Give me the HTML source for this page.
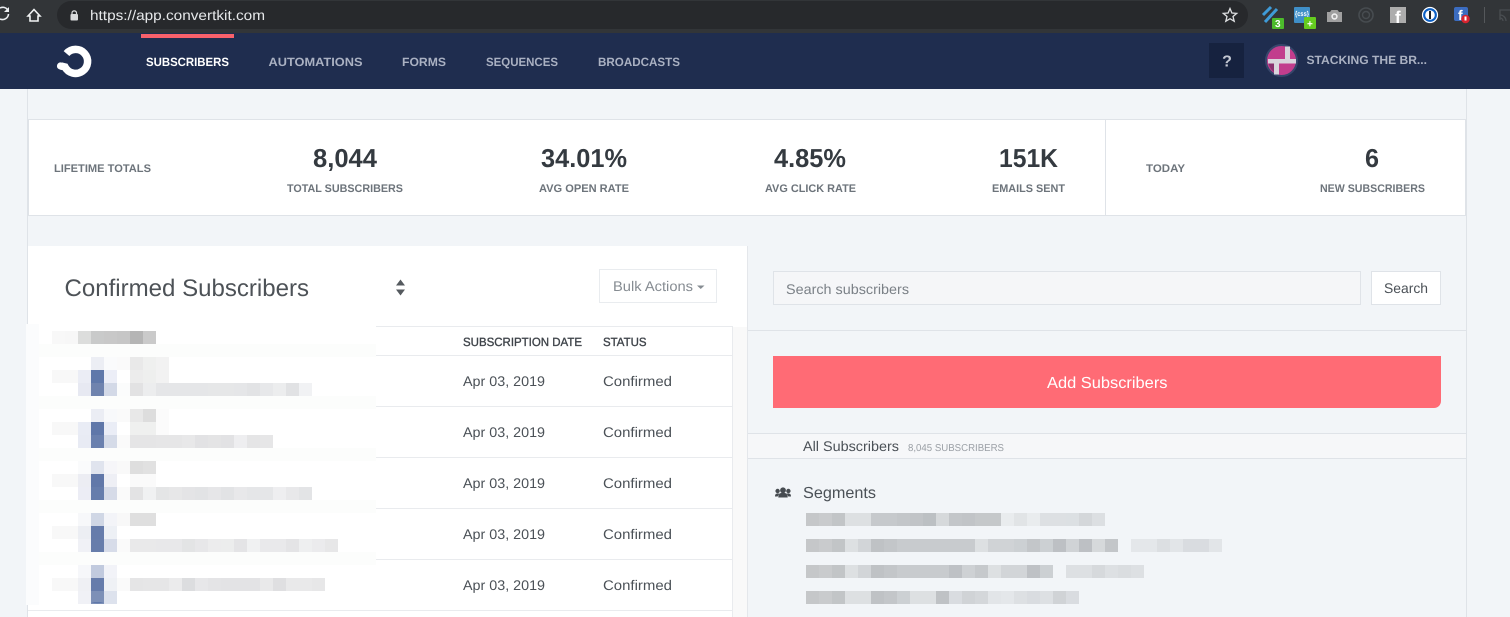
<!DOCTYPE html>
<html lang="en"><head><meta charset="utf-8"><title>ConvertKit Subscribers</title>
<style>
html,body{margin:0;padding:0;width:1510px;height:617px;overflow:hidden;background:#f2f5f8}
svg{position:absolute;left:0;top:0;display:block}
text{font-family:"Liberation Sans",sans-serif}
.m rect{width:13px;height:13px}
.nav{font-size:12px;font-weight:700;fill:#aab1c2}
.lab{font-size:11px;font-weight:700;fill:#6d747b}
.big{font-size:26px;font-weight:700;fill:#343a40}
.th{font-size:12px;fill:#3f444a;stroke:#3f444a;stroke-width:.35}
.td{font-size:14px;fill:#4b5157}
</style></head><body>
<svg width="1510" height="617" viewBox="0 0 1510 617" xmlns="http://www.w3.org/2000/svg" text-rendering="geometricPrecision">
<!-- browser chrome -->
<rect width="1510" height="33" fill="#323538"/>
<rect x="57" y="1" width="1191" height="28" rx="14" fill="#27292c"/>
<path d="M7.5 9.5A6 6 0 0 0 0 8M8.5 14A6 6 0 0 1 0 19" fill="none" stroke="#eceff1" stroke-width="1.6"/><path d="M9 7v5h-5z" fill="#eceff1"/>
<path d="M28 16l6-6.500 6 6.500h-2v5h-8v-5z" fill="none" stroke="#f1f3f4" stroke-width="1.600" stroke-linejoin="miter"/>
<rect x="70.500" y="14" width="7.500" height="6.500" rx="1" fill="#d8dadc"/><path d="M72 14.500v-1.800a2.300 2.300 0 0 1 4.500 0v1.800" fill="none" stroke="#d8dadc" stroke-width="1.200"/>
<text x="90" y="20" font-size="14" fill="#e6e8ea" textLength="175" lengthAdjust="spacingAndGlyphs">https://app.convertkit.com</text>
<path d="M1230 8.500l1.900 4.500 4.800.4-3.700 3.100 1.200 4.700-4.200-2.500-4.200 2.500 1.200-4.700-3.700-3.100 4.800-.4z" fill="none" stroke="#dfe1e3" stroke-width="1.300"/>
<!-- extensions -->
<path d="M1263 15l8-8M1265 22l12-13" stroke="#3f9bd8" stroke-width="3" fill="none"/>
<rect x="1272" y="18" width="12" height="11" rx="1" fill="#4cbb2b"/><text x="1275" y="27" font-size="10" font-weight="700" fill="#fff">3</text>
<rect x="1294" y="7" width="16" height="16" rx="1" fill="#3f8fc8"/><text x="1295" y="16" font-size="7" font-weight="700" fill="#fff" textLength="14" lengthAdjust="spacingAndGlyphs">{css}</text>
<rect x="1304" y="17" width="12" height="12" rx="1" fill="#65cc1f"/><text x="1307" y="27" font-size="10" font-weight="700" fill="#fff">+</text>
<path d="M1327 12h3l1.500-2h6l1.500 2h3v10h-15z" fill="#a0a0a0"/><circle cx="1334.500" cy="16.500" r="3.200" fill="#eee"/><circle cx="1334.500" cy="16.500" r="1.600" fill="#a0a0a0"/>
<circle cx="1366" cy="15" r="7" fill="none" stroke="#474c50" stroke-width="1.600"/><circle cx="1366" cy="15" r="3.500" fill="none" stroke="#474c50" stroke-width="1.400"/>
<rect x="1390" y="7" width="16" height="16" fill="#adadad"/><text x="1395" y="23" font-size="17" font-weight="700" fill="#fff">f</text>
<circle cx="1430" cy="15" r="7.500" fill="#0b5fc4" stroke="#fff" stroke-width="1.200"/><circle cx="1430" cy="15" r="4.800" fill="#fff"/><rect x="1429" y="11" width="2" height="8" fill="#1a1f24"/>
<rect x="1454" y="7" width="14" height="14" rx="2" fill="#3b6cc0"/><text x="1458" y="20" font-size="14" font-weight="700" fill="#fff">f</text><circle cx="1465.500" cy="19" r="4.300" fill="#d8232f"/><rect x="1464.500" y="16.500" width="2" height="4" fill="#fff"/>
<rect x="1484" y="7" width="1" height="16" fill="#55585b"/>
<path d="M1500 20v-10h10M1500 15a6 6 0 0 1 6 6M1500 18a3 3 0 0 1 3 3" fill="none" stroke="#4a4e52" stroke-width="1.300"/>
<!-- app nav -->
<rect y="33" width="1510" height="56" fill="#1f2d4f"/>
<rect x="141" y="34" width="93" height="4" fill="#f9616b"/>
<path d="M66.500 53.600A12 12 0 1 1 65 67L61 66" fill="none" stroke="#fff" stroke-width="7.500"/>
<circle cx="60.500" cy="66" r="3.600" fill="#fff"/>
<text class="nav" x="146" y="66" style="fill:#fff" textLength="83" lengthAdjust="spacingAndGlyphs">SUBSCRIBERS</text>
<text class="nav" x="268.500" y="66" textLength="94" lengthAdjust="spacingAndGlyphs">AUTOMATIONS</text>
<text class="nav" x="402" y="66" textLength="44" lengthAdjust="spacingAndGlyphs">FORMS</text>
<text class="nav" x="486" y="66" textLength="72" lengthAdjust="spacingAndGlyphs">SEQUENCES</text>
<text class="nav" x="598" y="66" textLength="82" lengthAdjust="spacingAndGlyphs">BROADCASTS</text>
<rect x="1209" y="43" width="35" height="35" fill="#16223f"/>
<text x="1227" y="66.500" text-anchor="middle" font-size="16" font-weight="700" fill="#c4c8d2">?</text>
<circle cx="1281.500" cy="60.500" r="15.500" fill="#c23d8d" stroke="#37466b" stroke-width="2"/>
<path d="M1279 63h16a14 14 0 0 1-8 11h-8z" fill="#c23d8d"/><path d="M1268.500 63h5.500v9a14 14 0 0 1-5.500-9z" fill="#8a2f6e"/>
<path d="M1268 59h28v4.500h-28zM1285 46.500h5v13h-5zM1274 63h5v11.500h-5z" fill="#d9d4dc"/>
<text class="nav" x="1306.500" y="64" textLength="120.500" lengthAdjust="spacingAndGlyphs">STACKING THE BR...</text>
<!-- page frame -->
<rect x="27" y="89" width="1" height="528" fill="#dfe3e8"/>
<rect x="1466" y="89" width="1" height="528" fill="#dfe3e8"/>
<!-- stats card -->
<rect x="28.500" y="119.500" width="1437" height="96" fill="#fff" stroke="#dfe3e8"/>
<rect x="1105" y="120" width="1" height="95" fill="#dfe3e8"/>
<text class="lab" x="54" y="172" textLength="97" lengthAdjust="spacingAndGlyphs">LIFETIME TOTALS</text>
<text class="big" x="313" y="167" textLength="64" lengthAdjust="spacingAndGlyphs">8,044</text>
<text class="lab" x="287" y="192" textLength="116" lengthAdjust="spacingAndGlyphs">TOTAL SUBSCRIBERS</text>
<text class="big" x="541" y="167" textLength="86" lengthAdjust="spacingAndGlyphs">34.01%</text>
<text class="lab" x="539" y="192" textLength="90" lengthAdjust="spacingAndGlyphs">AVG OPEN RATE</text>
<text class="big" x="774" y="167" textLength="72" lengthAdjust="spacingAndGlyphs">4.85%</text>
<text class="lab" x="765" y="192" textLength="91" lengthAdjust="spacingAndGlyphs">AVG CLICK RATE</text>
<text class="big" x="999" y="167" textLength="59" lengthAdjust="spacingAndGlyphs">151K</text>
<text class="lab" x="992" y="192" textLength="73" lengthAdjust="spacingAndGlyphs">EMAILS SENT</text>
<text class="lab" x="1146" y="172" textLength="39" lengthAdjust="spacingAndGlyphs">TODAY</text>
<text class="big" x="1365" y="167" textLength="14" lengthAdjust="spacingAndGlyphs">6</text>
<text class="lab" x="1320" y="192" textLength="105" lengthAdjust="spacingAndGlyphs">NEW SUBSCRIBERS</text>
<!-- left panel -->
<rect x="28" y="246" width="719" height="371" fill="#fff"/>
<rect x="733" y="327" width="14" height="290" fill="#f9f9f9"/>
<rect x="747" y="246" width="1" height="371" fill="#e4e7eb"/>
<text x="64.500" y="296" font-size="24" fill="#4d5257" textLength="244.500" lengthAdjust="spacingAndGlyphs">Confirmed Subscribers</text>
<path d="M400.500 279.500l4.500 6h-9zM400.500 295.500l4.500-6h-9z" fill="#555a5f"/>
<rect x="599.500" y="269.500" width="117" height="33" fill="#fff" stroke="#e9ecef"/>
<text x="613" y="291" font-size="14" fill="#868c92" textLength="80" lengthAdjust="spacingAndGlyphs">Bulk Actions</text>
<path d="M697 285.500h7.500l-3.750 3.500z" fill="#868c92"/>
<!-- table -->
<rect x="376" y="326" width="357" height="1" fill="#e9ebee"/>
<rect x="732" y="326" width="1" height="291" fill="#e9ebee"/>
<rect x="28" y="355" width="704" height="1" fill="#e9ebee"/>
<rect x="28" y="406" width="704" height="1" fill="#e9ebee"/>
<rect x="28" y="457" width="704" height="1" fill="#e9ebee"/>
<rect x="28" y="508" width="704" height="1" fill="#e9ebee"/>
<rect x="28" y="559" width="704" height="1" fill="#e9ebee"/>
<rect x="28" y="610" width="704" height="1" fill="#e9ebee"/>
<text class="th" x="463" y="346" textLength="119" lengthAdjust="spacingAndGlyphs">SUBSCRIPTION DATE</text>
<text class="th" x="603" y="346" textLength="43.500" lengthAdjust="spacingAndGlyphs">STATUS</text>
<text class="td" x="463" y="386" textLength="82" lengthAdjust="spacingAndGlyphs">Apr 03, 2019</text><text class="td" x="603" y="386" textLength="69" lengthAdjust="spacingAndGlyphs">Confirmed</text>
<text class="td" x="463" y="437" textLength="82" lengthAdjust="spacingAndGlyphs">Apr 03, 2019</text><text class="td" x="603" y="437" textLength="69" lengthAdjust="spacingAndGlyphs">Confirmed</text>
<text class="td" x="463" y="488" textLength="82" lengthAdjust="spacingAndGlyphs">Apr 03, 2019</text><text class="td" x="603" y="488" textLength="69" lengthAdjust="spacingAndGlyphs">Confirmed</text>
<text class="td" x="463" y="539" textLength="82" lengthAdjust="spacingAndGlyphs">Apr 03, 2019</text><text class="td" x="603" y="539" textLength="69" lengthAdjust="spacingAndGlyphs">Confirmed</text>
<text class="td" x="463" y="590" textLength="82" lengthAdjust="spacingAndGlyphs">Apr 03, 2019</text><text class="td" x="603" y="590" textLength="69" lengthAdjust="spacingAndGlyphs">Confirmed</text>
<!-- redaction mosaic, left -->
<rect x="27" y="324" width="349" height="281" fill="#fff"/>
<rect x="26" y="324" width="13" height="281" fill="#fbfcfd"/>
<rect x="39" y="344" width="337" height="13" fill="#fcfdfc"/><rect x="39" y="396" width="337" height="13" fill="#fcfdfc"/><rect x="39" y="448" width="337" height="13" fill="#fcfdfc"/><rect x="39" y="500" width="337" height="13" fill="#fcfdfc"/><rect x="39" y="552" width="337" height="13" fill="#fcfdfc"/>
<g class="m" shape-rendering="crispEdges">
<rect x="52" y="331" fill="#f8f8f8"/><rect x="65" y="331" fill="#f7f7f7"/><rect x="78" y="331" fill="#dcdddc"/><rect x="91" y="331" fill="#c9caca"/><rect x="104" y="331" fill="#c8c8c8"/><rect x="117" y="331" fill="#c6c6c6"/><rect x="130" y="331" fill="#b5b5b5"/><rect x="143" y="331" fill="#cacaca"/>
<rect x="91" y="357" fill="#eceef4"/><rect x="104" y="357" fill="#fafbfc"/><rect x="117" y="357" fill="#fafafa"/><rect x="130" y="357" fill="#e9e9e9"/><rect x="143" y="357" fill="#eff0ef"/><rect x="156" y="357" fill="#f2f2f2"/>
<rect x="52" y="370" fill="#f8f8f8"/><rect x="65" y="370" fill="#f8f8f8"/><rect x="78" y="370" fill="#ebedf5"/><rect x="91" y="370" fill="#5f78aa"/><rect x="104" y="370" fill="#eceef7"/><rect x="130" y="370" fill="#ececec"/><rect x="143" y="370" fill="#eeefee"/><rect x="156" y="370" fill="#f2f2f2"/>
<rect x="78" y="383" fill="#e7e9f2"/><rect x="91" y="383" fill="#6f83ae"/><rect x="104" y="383" fill="#d3d9e7"/><rect x="117" y="383" fill="#fbfcfc"/><rect x="130" y="383" fill="#e2e2e3"/><rect x="143" y="383" fill="#ecedee"/><rect x="156" y="383" fill="#e5e6e8"/><rect x="169" y="383" fill="#e5e6e8"/><rect x="182" y="383" fill="#e5e6e8"/><rect x="195" y="383" fill="#e5e6e8"/><rect x="208" y="383" fill="#e6e7e8"/><rect x="221" y="383" fill="#e6e7e8"/><rect x="234" y="383" fill="#e5e6e8"/><rect x="247" y="383" fill="#e2e3e5"/><rect x="260" y="383" fill="#e7e8ea"/><rect x="273" y="383" fill="#ecedee"/><rect x="286" y="383" fill="#e1e2e4"/><rect x="299" y="383" fill="#f1f2f4"/>
<rect x="91" y="409" fill="#ebedf4"/><rect x="104" y="409" fill="#f8f9fb"/><rect x="117" y="409" fill="#fafafa"/><rect x="130" y="409" fill="#e8e8e8"/><rect x="143" y="409" fill="#dddddd"/><rect x="156" y="409" fill="#fbfbfb"/>
<rect x="52" y="422" fill="#f8f8f8"/><rect x="65" y="422" fill="#f8f8f8"/><rect x="78" y="422" fill="#e9ecf5"/><rect x="91" y="422" fill="#5f77a9"/><rect x="104" y="422" fill="#eaedf6"/><rect x="130" y="422" fill="#eff0ef"/><rect x="143" y="422" fill="#eff0ef"/><rect x="156" y="422" fill="#fbfbfb"/>
<rect x="78" y="435" fill="#e8ebf4"/><rect x="91" y="435" fill="#6a80ae"/><rect x="104" y="435" fill="#d5dbe8"/><rect x="117" y="435" fill="#fafafa"/><rect x="130" y="435" fill="#e5e5e6"/><rect x="143" y="435" fill="#e5e5e6"/><rect x="156" y="435" fill="#e6e6e7"/><rect x="169" y="435" fill="#e6e6e7"/><rect x="182" y="435" fill="#e8e8e9"/><rect x="195" y="435" fill="#e2e2e4"/><rect x="208" y="435" fill="#e4e4e5"/><rect x="221" y="435" fill="#e2e2e4"/><rect x="234" y="435" fill="#eeeef0"/><rect x="247" y="435" fill="#e5e5e6"/><rect x="260" y="435" fill="#e6e6e7"/>
<rect x="78" y="461" fill="#fafbfc"/><rect x="91" y="461" fill="#e0e4ee"/><rect x="104" y="461" fill="#f6f6f9"/><rect x="117" y="461" fill="#f9f9f9"/><rect x="130" y="461" fill="#dedede"/><rect x="143" y="461" fill="#e1e1e1"/>
<rect x="52" y="474" fill="#f8f8f8"/><rect x="65" y="474" fill="#f8f8f8"/><rect x="78" y="474" fill="#ecedf3"/><rect x="91" y="474" fill="#6178a9"/><rect x="104" y="474" fill="#eeeff5"/><rect x="130" y="474" fill="#fafafa"/><rect x="143" y="474" fill="#fafafa"/>
<rect x="78" y="487" fill="#ecedf5"/><rect x="91" y="487" fill="#667dac"/><rect x="104" y="487" fill="#d6dbe8"/><rect x="117" y="487" fill="#fafafa"/><rect x="130" y="487" fill="#e3e3e4"/><rect x="143" y="487" fill="#f0f1f2"/><rect x="156" y="487" fill="#e4e5e6"/><rect x="169" y="487" fill="#e7e7e8"/><rect x="182" y="487" fill="#e4e4e6"/><rect x="195" y="487" fill="#e2e3e5"/><rect x="208" y="487" fill="#e6e6e8"/><rect x="221" y="487" fill="#e2e3e5"/><rect x="234" y="487" fill="#e8e8ea"/><rect x="247" y="487" fill="#e5e6e8"/><rect x="260" y="487" fill="#e5e6e8"/><rect x="273" y="487" fill="#eeeef0"/><rect x="286" y="487" fill="#e8e8ea"/><rect x="299" y="487" fill="#e3e4e6"/>
<rect x="78" y="513" fill="#f7f8fa"/><rect x="91" y="513" fill="#d0d7e5"/><rect x="104" y="513" fill="#f3f4f8"/><rect x="117" y="513" fill="#f8f8f8"/><rect x="130" y="513" fill="#dfdfdf"/><rect x="143" y="513" fill="#dfdfdf"/>
<rect x="52" y="526" fill="#f8f8f8"/><rect x="65" y="526" fill="#f8f8f8"/><rect x="78" y="526" fill="#eceef3"/><rect x="91" y="526" fill="#667cab"/><rect x="104" y="526" fill="#edf0f5"/>
<rect x="78" y="539" fill="#f0f1f6"/><rect x="91" y="539" fill="#677dab"/><rect x="104" y="539" fill="#d7dce9"/><rect x="117" y="539" fill="#fafafa"/><rect x="130" y="539" fill="#e9e9ea"/><rect x="143" y="539" fill="#e9e9ea"/><rect x="156" y="539" fill="#e8e8ea"/><rect x="169" y="539" fill="#e8e8ea"/><rect x="182" y="539" fill="#e3e4e5"/><rect x="195" y="539" fill="#e7e7e9"/><rect x="208" y="539" fill="#ececed"/><rect x="221" y="539" fill="#eceded"/><rect x="234" y="539" fill="#e4e4e6"/><rect x="247" y="539" fill="#f0f1f2"/><rect x="260" y="539" fill="#e9e9eb"/><rect x="273" y="539" fill="#e9e9eb"/><rect x="286" y="539" fill="#e4e4e6"/><rect x="299" y="539" fill="#eeeff0"/><rect x="312" y="539" fill="#ebebed"/><rect x="325" y="539" fill="#e7e7e8"/>
<rect x="78" y="565" fill="#f6f7fa"/><rect x="91" y="565" fill="#c1cade"/><rect x="104" y="565" fill="#f2f3f8"/>
<rect x="52" y="578" fill="#f8f8f8"/><rect x="65" y="578" fill="#f8f8f8"/><rect x="78" y="578" fill="#eff0f4"/><rect x="91" y="578" fill="#667cab"/><rect x="104" y="578" fill="#eff1f5"/><rect x="117" y="578" fill="#fafafa"/><rect x="130" y="578" fill="#e5e5e6"/><rect x="143" y="578" fill="#e6e6e7"/><rect x="156" y="578" fill="#e6e6e7"/><rect x="169" y="578" fill="#ebebec"/><rect x="182" y="578" fill="#dcdddf"/><rect x="195" y="578" fill="#e7e7e9"/><rect x="208" y="578" fill="#e4e4e6"/><rect x="221" y="578" fill="#e3e3e5"/><rect x="234" y="578" fill="#e3e3e5"/><rect x="247" y="578" fill="#e3e3e5"/><rect x="260" y="578" fill="#e9e9ea"/><rect x="273" y="578" fill="#dfdfe1"/><rect x="286" y="578" fill="#e9e9ea"/><rect x="299" y="578" fill="#e9e9ea"/><rect x="312" y="578" fill="#e7e7e8"/>
<rect x="78" y="591" fill="#f0f1f6"/><rect x="91" y="591" fill="#7d90b7"/><rect x="104" y="591" fill="#dde2ed"/>
</g>
<path d="M91 602h13q-6.500 2.500-13 0z" fill="#5f78aa"/>
<!-- right panel -->
<rect x="773.500" y="271.500" width="587" height="33" fill="#f5f6f8" stroke="#dfe3e8"/>
<text x="786" y="294" font-size="14" fill="#7b8187" textLength="123" lengthAdjust="spacingAndGlyphs">Search subscribers</text>
<rect x="1371.500" y="271.500" width="69" height="33" fill="#fff" stroke="#dfe3e8"/>
<text x="1384" y="293" font-size="14" fill="#4b5157" textLength="44" lengthAdjust="spacingAndGlyphs">Search</text>
<rect x="748" y="330" width="718" height="1" fill="#dfe3e8"/>
<path d="M773 356h668v45a7 7 0 0 1-7 7h-661z" fill="#ff6b75"/>
<text x="1047" y="388" font-size="16" fill="#fff" textLength="120.500" lengthAdjust="spacingAndGlyphs">Add Subscribers</text>
<rect x="748" y="433" width="718" height="25" fill="#f6f7f9"/>
<rect x="748" y="433" width="718" height="1" fill="#dfe3e8"/>
<rect x="748" y="458" width="718" height="1" fill="#dfe3e8"/>
<text x="803" y="451" font-size="14" fill="#4b5157" textLength="96" lengthAdjust="spacingAndGlyphs">All Subscribers</text>
<text x="908" y="451" font-size="10" fill="#9a9fa5" textLength="96" lengthAdjust="spacingAndGlyphs">8,045 SUBSCRIBERS</text>
<g fill="#464b50"><circle cx="783" cy="490.300" r="2.900"/><circle cx="777.600" cy="491" r="2.200"/><circle cx="788.400" cy="491" r="2.200"/><path d="M778.300 497.500c0-3.500 1.500-4.800 4.700-4.800s4.700 1.300 4.700 4.800z"/><path d="M775 496.500c0-2 .8-3 2.600-3h2l-2 3zM791 496.500c0-2-.8-3-2.600-3h-2l2 3z"/></g>
<text x="803" y="498" font-size="16" fill="#4b5157" textLength="73" lengthAdjust="spacingAndGlyphs">Segments</text>
<g class="m" shape-rendering="crispEdges">
<rect x="806" y="513" fill="#c5c7c9"/><rect x="819" y="513" fill="#c9cbcd"/><rect x="832" y="513" fill="#c2c5c7"/><rect x="845" y="513" fill="#dde0e2"/><rect x="858" y="513" fill="#dde0e2"/><rect x="871" y="513" fill="#c6c9cc"/><rect x="884" y="513" fill="#c6c9cc"/><rect x="897" y="513" fill="#c3c6c9"/><rect x="910" y="513" fill="#c1c4c7"/><rect x="923" y="513" fill="#bcc0c3"/><rect x="936" y="513" fill="#d6d9db"/><rect x="949" y="513" fill="#c3c6c9"/><rect x="962" y="513" fill="#c1c4c7"/><rect x="975" y="513" fill="#c5c8ca"/><rect x="988" y="513" fill="#c5c8ca"/><rect x="1001" y="513" fill="#e9ecee"/><rect x="1014" y="513" fill="#e1e4e6"/><rect x="1027" y="513" fill="#e9ecee"/><rect x="1040" y="513" fill="#dde0e3"/><rect x="1053" y="513" fill="#dde0e3"/><rect x="1066" y="513" fill="#dce0e3"/><rect x="1079" y="513" fill="#d4d7da"/><rect x="1092" y="513" fill="#dcdfe2"/>
<rect x="806" y="539" fill="#c5c7c9"/><rect x="819" y="539" fill="#c9cbcd"/><rect x="832" y="539" fill="#c2c5c7"/><rect x="845" y="539" fill="#dde0e2"/><rect x="858" y="539" fill="#d2d5d8"/><rect x="871" y="539" fill="#bfc2c5"/><rect x="884" y="539" fill="#c3c6c9"/><rect x="897" y="539" fill="#c8cbce"/><rect x="910" y="539" fill="#c8cbce"/><rect x="923" y="539" fill="#c8cbce"/><rect x="936" y="539" fill="#c8cbce"/><rect x="949" y="539" fill="#c8cbce"/><rect x="962" y="539" fill="#c8cbce"/><rect x="975" y="539" fill="#dde0e2"/><rect x="988" y="539" fill="#d0d3d6"/><rect x="1001" y="539" fill="#d0d3d6"/><rect x="1014" y="539" fill="#ccd0d3"/><rect x="1027" y="539" fill="#c3c6c9"/><rect x="1040" y="539" fill="#ccd0d3"/><rect x="1053" y="539" fill="#bdc0c4"/><rect x="1066" y="539" fill="#d0d3d6"/><rect x="1079" y="539" fill="#bdc0c4"/><rect x="1092" y="539" fill="#d6d9db"/><rect x="1105" y="539" fill="#c3c6c9"/><rect x="1131" y="539" fill="#e4e7ea"/><rect x="1144" y="539" fill="#e4e7ea"/><rect x="1157" y="539" fill="#dcdfe2"/><rect x="1170" y="539" fill="#e2e5e8"/><rect x="1183" y="539" fill="#d9dce0"/><rect x="1196" y="539" fill="#d9dce0"/><rect x="1209" y="539" fill="#e2e5e8"/>
<rect x="806" y="565" fill="#c5c7c9"/><rect x="819" y="565" fill="#c9cbcd"/><rect x="832" y="565" fill="#c2c5c7"/><rect x="845" y="565" fill="#dde0e2"/><rect x="858" y="565" fill="#d2d5d8"/><rect x="871" y="565" fill="#bfc2c5"/><rect x="884" y="565" fill="#c3c6c9"/><rect x="897" y="565" fill="#c8cbce"/><rect x="910" y="565" fill="#c8cbce"/><rect x="923" y="565" fill="#c8cbce"/><rect x="936" y="565" fill="#c8cbce"/><rect x="949" y="565" fill="#bec1c5"/><rect x="962" y="565" fill="#ced1d4"/><rect x="975" y="565" fill="#c6c9cc"/><rect x="988" y="565" fill="#dde0e2"/><rect x="1001" y="565" fill="#d2d5d8"/><rect x="1014" y="565" fill="#d2d5d8"/><rect x="1027" y="565" fill="#bec1c5"/><rect x="1040" y="565" fill="#ccd0d3"/><rect x="1066" y="565" fill="#dde0e3"/><rect x="1079" y="565" fill="#dde0e3"/><rect x="1092" y="565" fill="#d6d9dc"/><rect x="1105" y="565" fill="#dde0e3"/><rect x="1118" y="565" fill="#dadde0"/><rect x="1131" y="565" fill="#dde0e3"/>
<rect x="806" y="591" fill="#c5c7c9"/><rect x="819" y="591" fill="#c9cbcd"/><rect x="832" y="591" fill="#c2c5c7"/><rect x="845" y="591" fill="#dde0e2"/><rect x="858" y="591" fill="#dde0e2"/><rect x="871" y="591" fill="#bfc2c5"/><rect x="884" y="591" fill="#c3c6c9"/><rect x="897" y="591" fill="#ccd0d3"/><rect x="910" y="591" fill="#dde0e2"/><rect x="923" y="591" fill="#dde0e2"/><rect x="936" y="591" fill="#bfc2c5"/><rect x="949" y="591" fill="#d9dce0"/><rect x="962" y="591" fill="#d0d3d6"/><rect x="975" y="591" fill="#d4d7da"/><rect x="988" y="591" fill="#e2e5e8"/><rect x="1001" y="591" fill="#e4e7ea"/><rect x="1014" y="591" fill="#dde0e3"/><rect x="1027" y="591" fill="#d9dce0"/><rect x="1040" y="591" fill="#dde0e3"/><rect x="1053" y="591" fill="#d0d3d6"/><rect x="1066" y="591" fill="#d9dce0"/>
</g>
</svg>
</body></html>
